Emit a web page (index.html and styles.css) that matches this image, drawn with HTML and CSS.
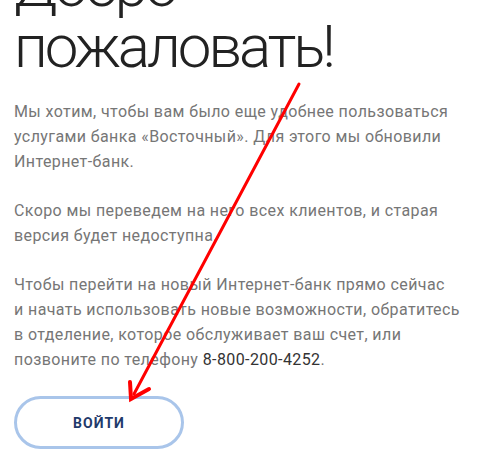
FILE: index.html
```html
<!DOCTYPE html>
<html lang="ru">

<head>
  <meta charset="UTF-8">
  <meta name="viewport" content="width=device-width, initial-scale=1.0">
  <title>Добро пожаловать</title>
  <link rel="stylesheet" href="styles.css">
</head>

<body>
  <div class="page">
    <h1 class="title">Добро<br>пожаловать!</h1>

    <p class="text">Мы хотим, чтобы вам было еще удобнее пользоваться<br>услугами банка «Восточный». Для этого мы обновили<br>Интернет-банк.</p>
    <p class="text">Скоро мы переведем на него всех клиентов, и старая<br>версия будет недоступна.</p>
    <p class="text">Чтобы перейти на новый Интернет-банк прямо сейчас<br>и начать использовать новые возможности, обратитесь<br>в отделение, которое обслуживает ваш счет, или<br>позвоните по телефону <span class="phone">8-800-200-4252</span>.</p>

    <button class="btn">ВОЙТИ</button>

    <!-- стрелка поверх контента -->
    <svg class="arrow" width="481" height="468" viewBox="0 0 481 468">
      <line x1="299" y1="84" x2="134" y2="394" stroke="#f00" stroke-width="3" stroke-linecap="round" />
      <polyline points="130,382 131,399 149,389" fill="none" stroke="#f00" stroke-width="4" stroke-linejoin="miter" stroke-linecap="round" />
    </svg>
  </div>
</body>

</html>
```

FILE: styles.css
```css
* {
  margin: 0;
  padding: 0;
}

body {
  background: #fff;
  font-family: "Roboto", "Liberation Sans", sans-serif;
}

.page {
  position: relative;
  width: 481px;
  height: 468px;
  overflow: hidden;
  padding-left: 14px;
  box-sizing: border-box;
}

.title {
  font-weight: 300;
  font-size: 60px;
  line-height: 61px;
  letter-spacing: -3px;
  color: #222;
  margin-top: -45px;
  margin-bottom: 22px;
}

.text {
  font-size: 16px;
  line-height: 25px;
  letter-spacing: 0.4px;
  color: #767676;
  margin-bottom: 24px;
  white-space: nowrap;
}

.phone {
  color: #333;
}

.btn {
  display: block;
  width: 170px;
  height: 53px;
  border: 3px solid #a9c5ea;
  border-radius: 27px;
  background: #fff;
  font-family: "Roboto", "Liberation Sans", sans-serif;
  font-weight: 700;
  font-size: 14px;
  letter-spacing: 1px;
  color: #1f3a6b;
}

.arrow {
  position: absolute;
  left: 0;
  top: 0;
  pointer-events: none;
}
```
